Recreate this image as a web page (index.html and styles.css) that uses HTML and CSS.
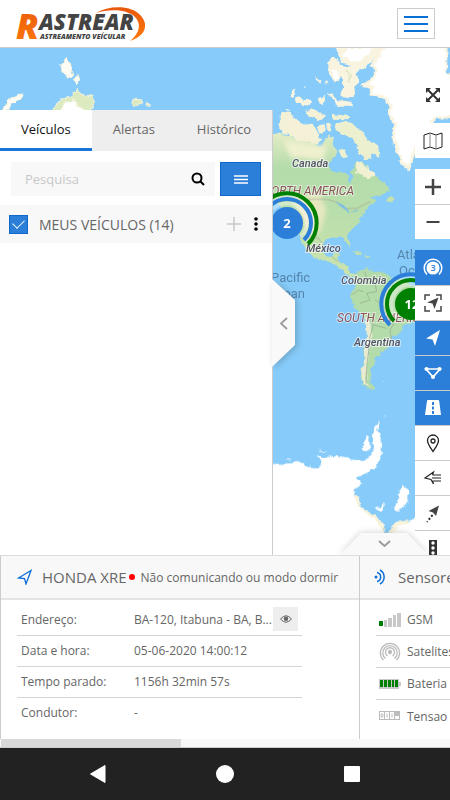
FILE: index.html
```html
<!DOCTYPE html>
<html lang="pt-BR">
<head>
    <meta charset="UTF-8">
    <meta name="viewport" content="width=device-width, initial-scale=1.0">
    <title>Rastrear</title>
    <link rel="stylesheet" href="styles.css">
</head>
<body>
    <header class="header">
        <svg class="logo" width="150" height="44" viewBox="0 0 150 44" role="img" aria-label="Rastrear">
            <defs>
                <linearGradient id="logoOrange" x1="0" y1="0" x2="0" y2="1">
                    <stop offset="0" stop-color="#e8590c"/>
                    <stop offset="1" stop-color="#ff7a0a"/>
                </linearGradient>
            </defs>
            <path d="M96 11C108 4 127 3 138 11c11 9 10 22-8 28 10-8 12-18 4-25-9-7-25-7-38-3z" fill="url(#logoOrange)"/>
            <text class="logo-initial" x="16" y="37">R</text>
            <text class="logo-name" x="39" y="28">ASTREAR</text>
            <text class="logo-tagline" x="40" y="37">ASTREAMENTO VEÍCULAR</text>
        </svg>
        <button class="menu-btn" aria-label="Menu">
            <svg width="24" height="16" viewBox="0 0 24 16"><path d="M0 1h24M0 8h24M0 15h24" stroke="#0b6fd8" stroke-width="2"/></svg>
        </button>
    </header>

    <main class="main">
        <svg class="map" viewBox="0 48 450 507" preserveAspectRatio="xMinYMin slice">
            <defs>
                <filter id="coast" x="-10" y="30" width="480" height="550" filterUnits="userSpaceOnUse">
                    <feTurbulence type="fractalNoise" baseFrequency="0.18" numOctaves="2" seed="4"/>
                    <feDisplacementMap in="SourceGraphic" scale="5" xChannelSelector="R" yChannelSelector="G"/>
                </filter>
                <linearGradient id="northLand" x1="0" y1="0" x2="0" y2="1">
                    <stop offset="0" stop-color="#e6edc5"/>
                    <stop offset="0.25" stop-color="#b4dcab"/>
                    <stop offset="0.55" stop-color="#b8deab"/>
                    <stop offset="1" stop-color="#cde4ae"/>
                </linearGradient>
                <filter id="soft"><feGaussianBlur stdDeviation="8"/></filter>
            </defs>
            <rect y="48" width="450" height="507" fill="#86cbf9"/>
            <g filter="url(#coast)">
                <!-- islands, upper left -->
                <g transform="scale(.33333)" fill="#fdfdf6" stroke="#f6f1dc" stroke-width="3">
                    <path d="M182 195L200 172 212 195 218 230 205 238 185 205zM220 240L232 225 242 240 228 255z"/>
                    <path d="M10 332L25 300 70 280 68 292 35 310 25 332z"/>
                    <path d="M155 332L180 300 215 290 232 265 245 283 280 290 283 310 270 332z" fill="#dceac0"/>
                    <path d="M180 332L190 308 222 300 235 320 260 332z" fill="#fff"/>
                    <path d="M395 310L400 297 425 300 428 312 400 318zM437 312L452 315 445 320z" fill="#dbeac0"/>
                </g>
                <!-- arctic islands -->
                <g transform="translate(225 0) scale(.33333)" fill="#f9f4e0">
                    <path d="M330 130H478L460 168 430 195 400 215 395 225 403 245 388 262 390 283 375 292 345 288 355 260 350 232 330 250 310 215 310 185 325 170 345 185 350 198 372 202 375 193 350 188 340 165z"/>
                    <path d="M370 145H440L415 180 380 185 350 170zM320 205L335 210 345 230 330 243z" fill="#fff"/>
                    <path d="M362 210L375 225 370 250" fill="none" stroke="#dbe9c3" stroke-width="5"/>
                    <path d="M190 290L210 265 212 280 200 295zM212 305L215 290 240 300 258 300 255 318 235 315zM268 230L285 240 288 252 270 240zM300 240L308 245 305 258zM282 295L300 287 295 315 283 310zM305 280L320 277 335 300 380 305 380 320 335 320 325 298zM232 258L242 255 240 264zM180 329L195 324 197 334z"/>
                </g>
                <!-- Greenland -->
                <path d="M386 40L380 54 372 66 376 71 372 80 364 85 372 88 370 95 385 97 391 106 389 112 395 126 393 137 398 152 402 163 409 168 412 158 417 140 428 125 437 118 447 118 456 112V75L447 72 446 40z" fill="#fff" stroke="#faf4e1" stroke-width="3"/>
                <path d="M448 40H460V76L447 72z" fill="#86cbf9"/>
                <!-- North America -->
                <g transform="translate(270 110) scale(.33333)">
                    <path d="M25 45L35 5 58 8 95 40 130 42 155 90 135 105 90 98 60 72 35 70zM105 2L130 -5 165 20 150 34 120 22zM140 50L160 42 165 60 152 75zM168 40L180 38 184 65 172 62z" fill="#f4f1d7"/>
                    <path d="M195 42L230 32 272 58 290 85 325 110 328 140 302 130 308 148 285 150 262 120 255 90 225 75 200 60z" fill="#edf0cf"/>
                    <path d="M205 122L225 118 235 140 215 145zM182 12L240 18 230 28 190 26z" fill="#eef0d2"/>
                    <path d="M-5 65L30 72 60 75 85 92 120 98 150 108 165 98 175 75 192 82 188 105 202 122 185 150 175 172 195 185 225 190 235 200 240 225 250 205 242 185 262 150 280 160 300 180 320 195 325 205 345 220 360 240 330 258 302 262 320 272 300 287 285 302 275 312 270 335 250 350 240 362 230 377 243 400 238 410 228 397 218 380 195 380 170 387 158 400 158 422 170 440 185 440 195 428 208 430 202 447 212 460 226 460 235 475 240 490 258 498 240 503 222 484 205 470 185 458 165 452 130 440 105 415 90 385 72 345 40 300 -5 250z" fill="url(#northLand)"/>
                    <path d="M262 150L290 170 320 195 295 205 258 190z" fill="#f2f0d3"/>
                    <path d="M346 268L365 258 375 268 360 277zM248 422L270 428 280 436 262 434zM285 434L300 437 290 441z" fill="#c3e0af"/>
                </g>
                <!-- South America -->
                <g transform="translate(270 250) scale(.33333)">
                    <path d="M250 80L270 60 290 52 300 62 340 68 360 80 400 92 435 110 520 130V160L450 210 405 220 395 245 370 260 360 275 370 282 350 290 345 300 330 305 328 320 305 325 320 335 310 345 300 360 305 375 298 390 315 415 300 420 280 405 272 380 275 355 283 330 280 300 290 260 293 220 280 195 255 175 245 150 240 135 255 115 250 95z" fill="#b4dcaa"/>
                    <path d="M285 195L300 215 305 250 298 300 292 350 288 395 302 415 282 404 274 380 276 355 284 330 282 300 291 260z" fill="#e9ecd1"/>
                    <path d="M340 390L348 392 344 395z" fill="#fff"/>
                </g>
                <!-- Antarctica -->
                <g transform="translate(270 400) scale(.33333)" fill="#fff">
                    <path d="M242 282L265 290 272 318 305 342 335 362 348 397 290 400zM350 397L382 364 410 362 430 380V400z" fill="#faf3dc"/>
                    <path d="M-900 195L10 192 60 190 90 185 110 200 150 203 155 185 142 165 160 172 200 168 240 178 275 182 300 170 312 150 308 110 315 85 328 62 322 90 335 120 335 165 325 190 295 220 260 232 275 250 255 265 252 290 265 318 295 345 322 368 345 400 365 400 385 378 412 372 435 350 560 340V500H-900z"/>
                    <path d="M275 150L280 138 290 108 298 115 300 152zM372 325L382 305 390 270 402 255 415 275 415 300 395 328 380 335zM316 320L332 322 340 306 342 330 328 332zM145 150L168 152 165 156zM50 176L60 176 58 182zM340 50L352 46 348 50z"/>
                </g>
            </g>
            <!-- terrain tones and borders -->
            <g transform="translate(270 110) scale(.33333)">
                <path d="M60 260L150 250 170 300 150 370 110 360z" fill="#f3eac5" opacity=".8" filter="url(#soft)"/>
                <path d="M40 90L170 110 160 150 60 140z" fill="#eff0cf" filter="url(#soft)"/>
                <path d="M10 268H170L205 278 230 296 260 295 300 275M95 378L145 385 165 410M185 440L205 455" fill="none" stroke="#a3a58f" stroke-width="2"/>
                <path d="M195 275L220 285 235 300 238 312 228 300 215 292zM238 308L265 298 260 304z" fill="#7cbcea"/>
            </g>
            <g transform="translate(270 250) scale(.33333)" fill="none" stroke="#93a68b" stroke-width="2">
                <path d="M285 65L290 90 315 100 320 125 290 130 300 150 270 160M245 135L265 120 280 125M315 150L340 165 350 195 375 215 360 240 365 270M293 205L310 225 300 260 295 310 290 350 288 400M310 225L350 235"/>
            </g>

            <g class="ocean-label">
                <text x="397" y="259">Atlantic</text>
                <text x="399" y="275">Ocean</text>
                <text x="271" y="282">Pacific</text>
                <text x="268" y="298">Ocean</text>
            </g>
            <g class="country-label">
                <text x="292" y="167">Canada</text>
                <text x="306" y="252">México</text>
                <text x="341" y="284">Colombia</text>
                <text x="354" y="346">Argentina</text>
            </g>
            <g class="continent-label">
                <text x="354" y="195" text-anchor="end">NORTH AMERICA</text>
                <text x="337" y="322">SOUTH AMERICA</text>
            </g>

            <!-- clusters -->
            <g fill="none" stroke-width="4">
                <path d="M273 209A19 19 0 0 1 301 237M268 204A26 26 0 0 1 306 242" stroke="#fff" stroke-opacity=".35"/>
                <path d="M270 206A23 23 0 0 1 304 240" stroke="#2b7fd9"/>
                <path d="M266 202A29 29 0 0 1 308 244" stroke="#008000"/>
                <path d="M397 318A19 19 0 0 1 425 290M392 323A26 26 0 0 1 430 285" stroke="#fff" stroke-opacity=".35"/>
                <path d="M394 321A23 23 0 0 1 428 287" stroke="#008000"/>
                <path d="M390 325A29 29 0 0 1 432 283" stroke="#2b7fd9"/>
            </g>
            <circle cx="287" cy="223" r="16" fill="#2b7fd9"/>
            <circle cx="411" cy="304" r="16" fill="#008000"/>
            <text class="cluster-label" x="287" y="228">2</text>
            <text class="cluster-label" x="412" y="309">12</text>
        </svg>

        <aside class="sidebar">
            <nav class="tabs">
                <button class="tab active">Veículos</button>
                <button class="tab">Alertas</button>
                <button class="tab">Histórico</button>
            </nav>
            <div class="search-row">
                <div class="search-box">
                    <input type="text" placeholder="Pesquisa" aria-label="Pesquisa">
                    <svg width="14" height="14" viewBox="0 0 14 14" fill="none" stroke="#000" stroke-width="2"><circle cx="6" cy="6" r="4.5"/><path d="M9 9l4 4"/></svg>
                </div>
                <button class="list-btn" aria-label="Lista">
                    <svg width="14" height="9" viewBox="0 0 14 9"><path d="M0 1h14M0 4.500h14M0 8h14" stroke="#fff" stroke-width="1.500"/></svg>
                </button>
            </div>
            <div class="group-row">
                <input type="checkbox" id="myVehicles" checked>
                <label for="myVehicles">MEUS VEÍCULOS (14)</label>
                <button class="icon-btn" aria-label="Adicionar">
                    <svg width="16" height="16" viewBox="0 0 16 16"><path d="M8 1v14M1 8h14" stroke="#c8c8c8" stroke-width="1.500"/></svg>
                </button>
                <button class="icon-btn" aria-label="Mais">
                    <svg width="4" height="14" viewBox="0 0 4 14"><circle cx="2" cy="2" r="1.800"/><circle cx="2" cy="7" r="1.800"/><circle cx="2" cy="12" r="1.800"/></svg>
                </button>
            </div>
            <button class="handle-side" aria-label="Recolher">
                <svg width="23" height="88" viewBox="0 0 23 88"><path d="M0 0L23 21V66L0 88z" fill="#f9f9f9"/><path d="M15 39l-6 5.500 6 5.500" fill="none" stroke="#999" stroke-width="1.700"/></svg>
            </button>
        </aside>

        <div class="toolbar">
            <button class="tool" aria-label="Tela cheia">
                <svg viewBox="0 0 20 20" fill="none" stroke="#333" stroke-width="2"><path d="M4 4l12 12M16 4L4 16"/><path d="M3 8V3h5L3 8zM12 3h5v5l-5-5zM3 12v5h5l-5-5zM17 12v5h-5l5-5z" fill="#333" stroke="none"/></svg>
            </button>
            <button class="tool" aria-label="Mapa">
                <svg viewBox="0 0 20 20" fill="none" stroke="#222" stroke-width="1"><path d="M1 4l6-2 6 2 6-2v14l-6 2-6-2-6 2z"/><path d="M7 2v14M13 4v14" stroke="#888"/></svg>
            </button>
            <div class="tool-group">
                <button class="tool" aria-label="Aproximar">
                    <svg viewBox="0 0 20 20"><path d="M10 2v16M2 10h16" stroke="#444" stroke-width="2.500"/></svg>
                </button>
                <button class="tool" aria-label="Afastar">
                    <svg viewBox="0 0 20 20"><path d="M3.500 10h13" stroke="#444" stroke-width="2"/></svg>
                </button>
            </div>
            <div class="tool-group">
                <button class="tool on" aria-label="Agrupar">
                    <svg viewBox="0 0 20 20" fill="none" stroke="#fff" stroke-width="1.500"><circle cx="10" cy="10" r="5.800" fill="#fff"/><path d="M4 16.500A8.800 8.800 0 1 1 16 16.500"/><text class="tool-digit" x="10" y="13">3</text></svg>
                </button>
                <button class="tool" aria-label="Centralizar">
                    <svg viewBox="0 0 20 20"><path d="M2 7V2h5M13 2h5v5M18 13v5h-5M7 18H2v-5" fill="none" stroke="#444" stroke-width="1.500"/><path d="M15.500 4.500L11.500 16l-2-5.500L4 9.500z" fill="#444"/></svg>
                </button>
                <button class="tool on" aria-label="Veículos">
                    <svg viewBox="0 0 20 20"><path d="M17 2L12 18 9.500 11.500 3 10.500z" fill="#fff"/></svg>
                </button>
                <button class="tool on" aria-label="Cercas">
                    <svg viewBox="0 0 20 20" fill="#fff"><path d="M3 6h14l-7 8z" fill="none" stroke="#fff" stroke-width="1.700"/><circle cx="3.500" cy="6" r="2"/><circle cx="16.500" cy="6" r="2"/><circle cx="10" cy="14" r="2"/></svg>
                </button>
                <button class="tool on" aria-label="Rotas">
                    <svg viewBox="0 0 20 20"><path d="M5 2h10q1 0 1.200 1L18 17H2L4 3q0-1 1-1z" fill="#fff"/><path d="M10 4v12" stroke="#2b7fd9" stroke-width="2" stroke-dasharray="3 1.500"/></svg>
                </button>
                <button class="tool" aria-label="Pontos">
                    <svg viewBox="0 0 20 20" fill="none" stroke="#222" stroke-width="1.300"><path d="M10 18.500C7 14 4.500 11 4.500 7.500a5.500 5.500 0 0 1 11 0C15.500 11 13 14 10 18.500z"/><circle cx="10" cy="8" r="2"/></svg>
                </button>
                <button class="tool" aria-label="Etiquetas">
                    <svg viewBox="0 0 20 20" fill="none" stroke="#222" stroke-width="1.200"><path d="M9.500 7l1-3L2 10l6 1.500 2.500 4.500L9.500 13M9.500 7h8.500M9 10h9M9.500 13h8.500"/></svg>
                </button>
                <button class="tool" aria-label="Trajeto">
                    <svg viewBox="0 0 20 20"><path d="M16 2.500L13 13l-3-3.500L5.500 8z" fill="#444"/><path d="M9.500 12L4 19" stroke="#222" stroke-width="2" stroke-dasharray="2 2"/></svg>
                </button>
                <button class="tool" aria-label="Trânsito">
                    <svg viewBox="0 0 20 20"><rect x="6" y="2" width="8" height="16" fill="#333"/><g fill="#fff"><circle cx="10" cy="5" r="1.700"/><circle cx="10" cy="10" r="1.700"/><circle cx="10" cy="15" r="1.700"/></g></svg>
                </button>
            </div>
        </div>

        <button class="handle-bottom" aria-label="Ocultar painel">
            <svg width="88" height="22" viewBox="0 0 88 22"><path d="M0 22L21 0H67L88 22z" fill="#f9f9f9"/><path d="M39 8l5.500 5L50 8" fill="none" stroke="#999" stroke-width="1.700"/></svg>
        </button>
    </main>

    <section class="details">
        <div class="panel panel-vehicle">
            <div class="panel-title">
                <svg width="16" height="16" viewBox="0 0 16 16" fill="none" stroke="#0b6fd8" stroke-width="1.300"><path d="M14 1.500L9 15 7.500 9.500 1.500 9z"/></svg>
                <h2>HONDA XRE</h2>
                <span class="status-dot"></span>
                <span class="status-text">Não comunicando ou modo dormir</span>
            </div>
            <table class="info-table">
                <tr>
                    <th scope="row">Endereço:</th>
                    <td>
                        <div class="address">
                            <span>BA-120, Itabuna - BA, B...</span>
                            <button class="eye-btn" aria-label="Ver endereço">
                                <svg width="12" height="8" viewBox="0 0 12 8"><path d="M.5 4Q6-2.500 11.500 4 6 10.500 .5 4z" fill="none" stroke="#666"/><circle cx="6" cy="3.800" r="2.300" fill="#666"/></svg>
                            </button>
                        </div>
                    </td>
                </tr>
                <tr>
                    <th scope="row">Data e hora:</th>
                    <td>05-06-2020 14:00:12</td>
                </tr>
                <tr>
                    <th scope="row">Tempo parado:</th>
                    <td>1156h 32min 57s</td>
                </tr>
                <tr>
                    <th scope="row">Condutor:</th>
                    <td>-</td>
                </tr>
            </table>
        </div>
        <div class="panel panel-sensors">
            <div class="panel-title">
                <svg width="16" height="16" viewBox="0 0 16 16" fill="none" stroke="#0b6fd8" stroke-width="1.500"><circle cx="3" cy="8" r="1.500" fill="#0b6fd8" stroke="none"/><path d="M4 3.500a4.600 4.600 0 0 1 0 9M7 1a8 8 0 0 1 0 14"/></svg>
                <h2>Sensores</h2>
            </div>
            <ul class="sensor-list">
                <li>
                    <svg width="22" height="14" viewBox="0 0 22 14" fill="#c8c8c8"><path d="M0 8h4v5H0z" fill="#008000"/><path d="M5 7h3v7H5zM9 5h4v9H9zM14 2h3v12h-3zM18 0h4v14h-4z"/></svg>
                    GSM
                </li>
                <li>
                    <svg width="22" height="20" viewBox="0 0 22 20" fill="none" stroke="#bbb" stroke-width="1.300"><circle cx="11" cy="10" r="1.500" fill="#bbb"/><path d="M8.500 14a4.500 4.500 0 1 1 5 0M6.500 16.500a7.200 7.200 0 1 1 9 0M4.500 18a9.600 9.600 0 1 1 13 0"/></svg>
                    Satelites
                </li>
                <li>
                    <svg width="22" height="12" viewBox="0 0 22 12"><path d="M0 1h20v3h2v4h-2v3H0z" fill="#c8c8c8"/><path d="M1 2h3v7H1zM5 2h3v7H5zM9 2h3v7H9zM13 2h2v7h-2zM16 2h3v7h-3z" fill="#008000"/></svg>
                    Bateria
                </li>
                <li>
                    <svg width="22" height="10" viewBox="0 0 22 10"><rect x=".5" y=".5" width="20" height="8" fill="#fff" stroke="#bbb"/><path d="M5.500 0v9M10.500 0v9M15.500 0v9" stroke="#bbb"/><path d="M16 1h4v4h-4z" fill="#bbb"/><path d="M8 2.500v4M13 2.500v4" stroke="#bbb"/><ellipse cx="3" cy="4.500" rx="1" ry="2" fill="none" stroke="#bbb"/></svg>
                    Tensao
                </li>
            </ul>
        </div>
    </section>
    <div class="scroll-track"><div class="scroll-thumb"></div></div>

    <footer class="system-bar">
        <button aria-label="Voltar"><svg width="18" height="20" viewBox="0 0 18 20"><path d="M1.500 10L16 1.500V18.500z" fill="#fff" stroke="#fff" stroke-linejoin="round"/></svg></button>
        <button aria-label="Início"><svg width="20" height="20" viewBox="0 0 20 20"><circle cx="10" cy="10" r="9" fill="#fff"/></svg></button>
        <button aria-label="Recentes"><svg width="18" height="18" viewBox="0 0 18 18"><rect x="1" y="1" width="16" height="16" rx="1" fill="#fff"/></svg></button>
    </footer>
</body>
</html>
```
FILE: styles.css
```css
* {
    box-sizing: border-box;
    margin: 0;
    padding: 0;
}

body {
    display: flex;
    flex-direction: column;
    height: 100vh;
    overflow: hidden;
    background-color: white;
    color: #666;
    font-family: "Open Sans", sans-serif;
    font-size: 13px;
}

button {
    display: flex;
    justify-content: center;
    align-items: center;
    border: none;
    background: none;
    color: inherit;
    font: inherit;
    cursor: pointer;
}

/* Header */
.header {
    display: flex;
    justify-content: space-between;
    align-items: center;
    height: 48px;
    padding-right: 15px;
    border-bottom: 1px solid #ccc;
}

.logo {
    overflow: visible;
}

.logo text {
    font-style: italic;
    font-weight: 800;
}

.logo-initial {
    font-size: 35px;
    fill: url(#logoOrange);
}

.logo-name {
    font-size: 22px;
    fill: #444;
}

.logo-tagline {
    font-size: 7px;
    fill: #444;
}

.menu-btn {
    width: 38px;
    height: 31px;
    border: 1px solid #ccc;
}

/* Map */
.main {
    position: relative;
    display: flex;
    justify-content: space-between;
    flex: 1;
    min-height: 0;
    overflow: hidden;
}

.map {
    position: absolute;
    top: 0;
    left: 0;
    width: 100%;
    height: 100%;
}

.map text {
    font-family: Roboto, sans-serif;
    paint-order: stroke;
}

.ocean-label {
    font-size: 13px;
    font-weight: 400;
    fill: #5485ad;
}

.country-label {
    font-size: 11px;
    font-style: italic;
    font-weight: 500;
    fill: #565568;
    stroke: rgba(255, 255, 255, 0.6);
    stroke-width: 2px;
}

.continent-label {
    font-size: 12px;
    font-style: italic;
    font-weight: 400;
    fill: #8a5358;
    stroke: rgba(255, 255, 255, 0.5);
    stroke-width: 2px;
}

.map .cluster-label {
    font-family: "Open Sans", sans-serif;
    font-size: 13px;
    font-weight: 700;
    text-anchor: middle;
    fill: white;
}

/* Sidebar */
.sidebar {
    position: relative;
    width: 273px;
    margin-top: 62px;
    border-right: 1px solid #ccc;
    background-color: white;
}

.tabs {
    display: flex;
    height: 41px;
}

.tab {
    flex: auto;
    border-bottom: 3px solid #eee;
    background-color: #eee;
}

.tab.active {
    border-bottom-color: #1976d8;
    background-color: white;
    color: #111;
}

.search-row {
    display: flex;
    gap: 5px;
    padding: 11px 11px 9px;
}

.search-box {
    display: flex;
    flex: 1;
    align-items: center;
    height: 34px;
    padding: 0 10px 0 14px;
    background-color: #f8f8f8;
}

.search-box input {
    flex: 1;
    min-width: 0;
    border: none;
    outline: none;
    background: none;
    font: inherit;
}

.search-box input::placeholder {
    color: #c8c8c8;
}

.list-btn {
    width: 41px;
    height: 34px;
    border: 1px solid #1068cc;
    background-color: #2b7fd9;
}

.group-row {
    display: flex;
    align-items: center;
    height: 38px;
    padding: 0 14px 0 9px;
    background-color: #f8f8f8;
}

.group-row label {
    flex: 1;
    margin-left: 11px;
    font-size: 14px;
}

.group-row input {
    appearance: none;
    display: grid;
    place-items: center;
    width: 19px;
    height: 19px;
    border: 1px solid #1068cc;
    background-color: #2b7fd9;
}

.group-row input:checked::before {
    content: "";
    width: 10px;
    height: 6px;
    margin-bottom: 4px;
    border: solid white;
    border-width: 0 0 1px 1px;
    transform: rotate(-45deg);
}

.icon-btn + .icon-btn {
    margin-left: 12px;
}

.handle-side {
    position: absolute;
    top: 169px;
    left: 100%;
    filter: drop-shadow(2px 1px 3px rgba(0, 0, 0, 0.2));
}

.handle-bottom {
    position: absolute;
    right: 22px;
    bottom: 0;
    filter: drop-shadow(0 -1px 3px rgba(0, 0, 0, 0.15));
}

/* Map tools */
.toolbar {
    position: relative;
    display: flex;
    flex-direction: column;
    gap: 11px;
    width: 35px;
    padding-top: 29px;
}

.tool {
    flex: none;
    width: 35px;
    height: 35px;
    background-color: white;
}

.tool svg {
    width: 20px;
    height: 20px;
}

.tool-group .tool + .tool {
    border-top: 1px solid #ccc;
}

.tool.on {
    background-color: #2b7fd9;
}

.tool-digit {
    font-size: 9px;
    font-weight: 600;
    text-anchor: middle;
    fill: #2b7fd9;
    stroke: none;
}

/* Details */
.details {
    display: flex;
    height: 184px;
    overflow: hidden;
    border-top: 1px solid #ddd;
    border-left: 1px solid #ccc;
}

.panel {
    flex: none;
    border-right: 1px solid #ccc;
}

.panel-vehicle {
    width: 359px;
}

.panel-sensors {
    width: 300px;
}

.panel-title {
    display: flex;
    align-items: center;
    height: 44px;
    padding-left: 16px;
    border-bottom: 2px solid #e4e4e4;
    background-color: #f8f8f8;
}

.panel-title h2 {
    margin-left: 9px;
    font-size: 15px;
    font-weight: 400;
}

.panel-sensors .panel-title {
    padding-left: 13px;
}

.status-dot {
    width: 6px;
    height: 6px;
    margin-left: 2px;
    border-radius: 50%;
    background-color: red;
}

.status-text {
    margin-left: 6px;
    font-size: 12px;
}

.info-table {
    width: 285px;
    margin: 4px 0 0 16px;
    border-collapse: collapse;
    font-size: 12px;
}

.info-table th,
.info-table td {
    height: 31px;
    border-bottom: 1px solid #d5d5d5;
    font-weight: 400;
    text-align: left;
}

.info-table th {
    width: 117px;
    padding-left: 4px;
}

.info-table tr:last-child > * {
    border-bottom: none;
}

.address {
    display: flex;
    justify-content: space-between;
    align-items: center;
    padding-right: 4px;
    white-space: nowrap;
}

.eye-btn {
    width: 25px;
    height: 24px;
    background-color: #eee;
}

.sensor-list {
    margin: 4px 16px 0;
    list-style: none;
    font-size: 12px;
}

.sensor-list li {
    display: flex;
    align-items: center;
    gap: 6px;
    height: 32px;
    padding-left: 3px;
    border-bottom: 1px solid #d5d5d5;
}

.sensor-list li:last-child {
    border-bottom: none;
}

.scroll-track {
    height: 9px;
    padding-left: 1px;
    border-bottom: 1px solid #ccc;
    background-color: #f8f8f8;
}

.scroll-thumb {
    width: 40%;
    height: 8px;
    background-color: #d9d9d9;
}

/* Android buttons */
.system-bar {
    display: flex;
    justify-content: space-around;
    align-items: center;
    height: 52px;
    padding: 0 35px;
    background-color: #222;
}
```
